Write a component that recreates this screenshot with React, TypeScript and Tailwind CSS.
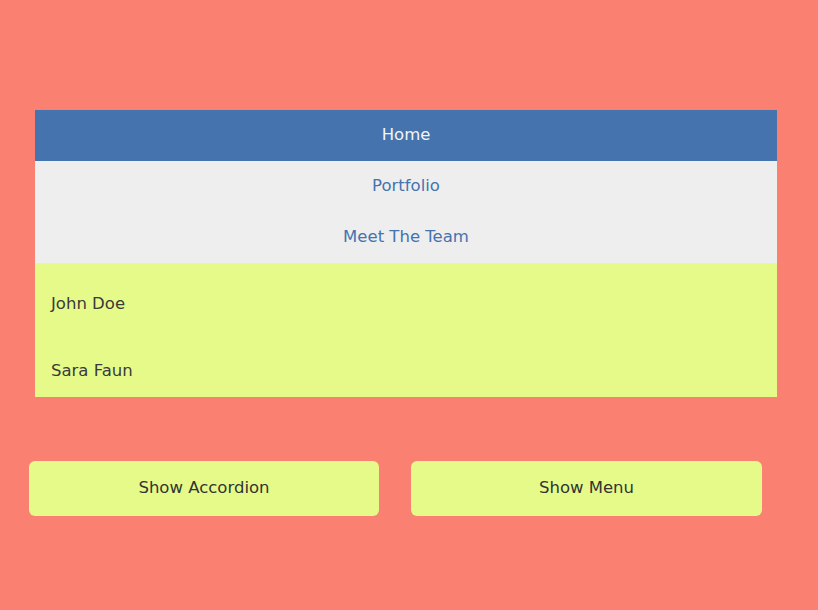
const font = { fontFamily: '"DejaVu Sans", "Open Sans", sans-serif' };

const App: React.FC = () => (
     <div className="w-[818px] h-[610px] bg-[#fa8072] pt-[110px]" style={font}>
          {/* Menu + accordion panel */}
          <div className="ml-[35px] w-[742px]">
               <div className="h-[51px] flex items-center justify-center bg-[#4573ae] text-[#f4f4f4] text-[16.5px]">
                    Home
               </div>
               <div className="h-[51px] flex items-center justify-center bg-[#eeeeee] text-[#4573ae] text-[16.5px]">
                    Portfolio
               </div>
               <div className="h-[51px] flex items-center justify-center bg-[#eeeeee] text-[#4573ae] text-[16.5px]">
                    Meet The Team
               </div>
               <div className="bg-[#e6fa89] text-[#3a3a3a] text-[16.5px] leading-[20px] px-4 pt-[31px] pb-[16px]">
                    <div>John Doe</div>
                    <div className="mt-[47px]">Sara Faun</div>
               </div>
          </div>

          {/* Buttons */}
          <div className="flex gap-8 ml-[29px] mt-[64px]">
               <button className="w-[350px] h-[55px] rounded-md bg-[#e6fa89] text-[#333] text-[16.5px]">
                    Show Accordion
               </button>
               <button className="w-[351px] h-[55px] rounded-md bg-[#e6fa89] text-[#333] text-[16.5px]">
                    Show Menu
               </button>
          </div>
     </div>
);

export default App;
